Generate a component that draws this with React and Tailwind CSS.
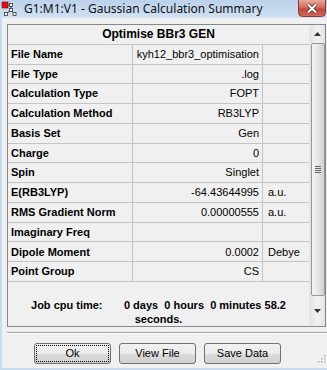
import React from 'react';

const rows = [
    { label: 'File Name', value: 'kyh12_bbr3_optimisation', unit: '' },
    { label: 'File Type', value: '.log', unit: '' },
    { label: 'Calculation Type', value: 'FOPT', unit: '' },
    { label: 'Calculation Method', value: 'RB3LYP', unit: '' },
    { label: 'Basis Set', value: 'Gen', unit: '' },
    { label: 'Charge', value: '0', unit: '' },
    { label: 'Spin', value: 'Singlet', unit: '' },
    { label: 'E(RB3LYP)', value: '-64.43644995', unit: 'a.u.' },
    { label: 'RMS Gradient Norm', value: '0.00000555', unit: 'a.u.' },
    { label: 'Imaginary Freq', value: '', unit: '' },
    { label: 'Dipole Moment', value: '0.0002', unit: 'Debye' },
    { label: 'Point Group', value: 'CS', unit: '' },
];

const AppIcon = () => (
    <svg width="16" height="16" viewBox="0 0 16 16">
        <line x1="5" y1="4" x2="10" y2="4" stroke="#333" strokeWidth="1" />
        <line x1="10" y1="4" x2="10" y2="9" stroke="#333" strokeWidth="1" />
        <line x1="10" y1="9" x2="5" y2="13" stroke="#333" strokeWidth="1" />
        <line x1="10" y1="9" x2="14" y2="13" stroke="#333" strokeWidth="1" />
        <rect x="1" y="1" width="6" height="6" fill="#e01010" stroke="#700" strokeWidth="0.6" />
        <rect x="8.5" y="2.5" width="3" height="3" fill="#fff" stroke="#333" strokeWidth="0.8" />
        <rect x="8.5" y="7.5" width="3" height="3" fill="#fff" stroke="#333" strokeWidth="0.8" />
        <rect x="3.5" y="11.5" width="3" height="3" fill="#fff" stroke="#333" strokeWidth="0.8" />
        <rect x="12" y="11.5" width="3" height="3" fill="#fff" stroke="#333" strokeWidth="0.8" />
    </svg>
);

const CloseButton = () => (
    <svg width="28" height="17" viewBox="0 0 28 17" className="shrink-0 mr-[1px]">
        <defs>
            <linearGradient id="closeGrad" x1="0" y1="0" x2="0" y2="1">
                <stop offset="0" stopColor="#e8aa9f" />
                <stop offset="0.45" stopColor="#d3695c" />
                <stop offset="0.55" stopColor="#c2473a" />
                <stop offset="1" stopColor="#d06b5e" />
            </linearGradient>
        </defs>
        <path d="M0.5 0 V12.5 Q0.5 16.5 4.5 16.5 H23.5 Q27.5 16.5 27.5 12.5 V0" fill="url(#closeGrad)" stroke="#8a3a32" />
        <path d="M10 4.5 L18 12.5 M18 4.5 L10 12.5" stroke="#5a2a25" strokeWidth="3.6" />
        <path d="M10 4.5 L18 12.5 M18 4.5 L10 12.5" stroke="#fff" strokeWidth="2" />
    </svg>
);

const Btn = ({ label, focused }) => (
    <button
        className={`w-[77px] h-[21px] shrink-0 rounded-[3px] border border-[#707070] bg-[linear-gradient(to_bottom,#f2f2f2,#ebebeb_50%,#dddddd_51%,#cfcfcf)] text-[11px] text-black flex items-center justify-center ${focused ? 'outline outline-1 outline-dotted outline-black -outline-offset-[3px]' : ''}`}
    >
        {label}
    </button>
);

export default function App() {
    return (
        <div
            className="w-[327px] h-[370px] bg-[#c9dbef] flex flex-col overflow-hidden"
            style={{ fontFamily: '"Liberation Sans", Arial, sans-serif' }}
        >
            {/* Title bar */}
            <div className="h-[18px] flex items-start bg-[linear-gradient(to_bottom,#bcd2ea,#d0e1f3)] shrink-0">
                <div className="w-[20px] h-[18px] shrink-0 pl-[1px] pt-[1px]">
                    <AppIcon />
                </div>
                <span
                    className="ml-[4px] mt-[1px] text-[12px] leading-[15px] text-[#111] whitespace-nowrap"
                    style={{ fontFamily: '"Noto Sans", "Open Sans", sans-serif' }}
                >
                    G1:M1:V1 - Gaussian Calculation Summary
                </span>
                <div className="ml-auto" />
                <CloseButton />
            </div>

            {/* Window body */}
            <div className="flex-1 ml-[2px] mb-[2px] bg-[#f0f0f0] flex flex-col">
                {/* Panel */}
                <div className="mt-[6px] ml-[5px] w-[319px] h-[303px] border border-[#828790] bg-[#f0f0f0] flex">
                    <div className="w-[301px] flex flex-col text-[11px] text-black">
                        <div className="h-[20px] border-b border-[#c4c4c4] flex items-center justify-center font-bold text-[12px]">
                            Optimise BBr3 GEN
                        </div>
                        {rows.map((r) => (
                            <div key={r.label} className="h-[20px] border-b border-[#c4c4c4] flex">
                                <div className="w-[125px] border-r border-[#c4c4c4] pl-[3px] flex items-center font-bold">
                                    {r.label}
                                </div>
                                <div className="w-[130px] border-r border-[#c4c4c4] pr-[3px] flex items-center justify-end">
                                    {r.value}
                                </div>
                                <div className="flex-1 pl-[5px] flex items-center">{r.unit}</div>
                            </div>
                        ))}
                        <div className="mt-[16px] text-center font-bold leading-[14px] whitespace-pre">
                            <div>{'Job cpu time:       0 days  0 hours  0 minutes 58.2'}</div>
                            <div>seconds.</div>
                        </div>
                    </div>
                    {/* Scrollbar */}
                    <div className="w-[16px] border-l border-[#e6e6e6] bg-[linear-gradient(to_right,#e3e3e3,#f2f2f2,#e3e3e3)] flex flex-col items-center">
                        <div className="h-[18px] w-full flex items-center justify-center">
                            <svg width="7" height="4" viewBox="0 0 7 4">
                                <path d="M0 4 L3.5 0 L7 4 Z" fill="#333" />
                            </svg>
                        </div>
                        <div className="w-[14px] h-[253px] rounded-[2px] border border-[#979797] bg-[linear-gradient(to_right,#f3f3f3,#e6e6e6,#d2d2d2)] flex items-center justify-center">
                            <div className="flex flex-col gap-[1px]">
                                <div className="w-[6px] h-[1px] bg-[#666]" />
                                <div className="w-[6px] h-[1px] bg-[#666]" />
                                <div className="w-[6px] h-[1px] bg-[#666]" />
                                <div className="w-[6px] h-[1px] bg-[#666]" />
                            </div>
                        </div>
                        <div className="flex-1 w-full flex items-center justify-center">
                            <svg width="7" height="4" viewBox="0 0 7 4">
                                <path d="M0 0 L7 0 L3.5 4 Z" fill="#333" />
                            </svg>
                        </div>
                    </div>
                </div>

                {/* Separator */}
                <div className="mt-[5px] ml-[5px] w-[320px] h-[2px] border-t border-[#a0a0a0] border-b border-b-white" />

                {/* Buttons */}
                <div className="mt-[9px] flex items-center pl-[32px] gap-[8px] relative">
                    <Btn label="Ok" focused />
                    <Btn label="View File" />
                    <Btn label="Save Data" />
                    <svg className="absolute right-[1px] top-[12px]" width="8" height="8" viewBox="0 0 8 8">
                        <rect x="6" y="6" width="1.5" height="1.5" fill="#b0b0b0" />
                        <rect x="3" y="6" width="1.5" height="1.5" fill="#b0b0b0" />
                        <rect x="6" y="3" width="1.5" height="1.5" fill="#b0b0b0" />
                        <rect x="0" y="6" width="1.5" height="1.5" fill="#b0b0b0" />
                        <rect x="3" y="3" width="1.5" height="1.5" fill="#b0b0b0" />
                        <rect x="6" y="0" width="1.5" height="1.5" fill="#b0b0b0" />
                    </svg>
                </div>
            </div>
        </div>
    );
}
